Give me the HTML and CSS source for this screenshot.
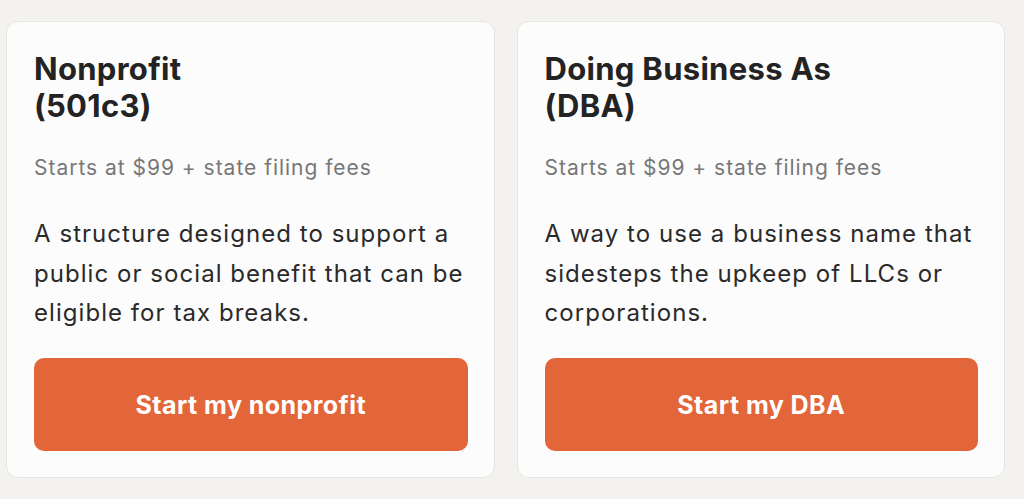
FILE: index.html
```html
<!DOCTYPE html>
<html lang="en">
<head>
<meta charset="utf-8">
<title>Business types</title>
<link rel="stylesheet" href="styles.css">
</head>
<body>
<main class="cards">
  <section class="card">
    <h2 class="card-title">Nonprofit<br>(501c3)</h2>
    <p class="card-price">Starts at $99 + state filing fees</p>
    <p class="card-desc">A structure designed to support a public or social benefit that can be eligible for tax breaks.</p>
    <a class="card-btn" href="#">Start my nonprofit</a>
  </section>
  <section class="card">
    <h2 class="card-title">Doing Business As<br>(DBA)</h2>
    <p class="card-price">Starts at $99 + state filing fees</p>
    <p class="card-desc">A way to use a business name that sidesteps the upkeep of LLCs or corporations.</p>
    <a class="card-btn" href="#">Start my DBA</a>
  </section>
</main>
</body>
</html>
```
FILE: styles.css
```css
* { box-sizing: border-box; }
html, body { margin: 0; background: #f3f2ee; }
body { font-family: Inter, "Open Sans", "Liberation Sans", sans-serif; }
.cards {
  display: flex;
  gap: 22px;
  padding: 21px 19px 0 6px;
}
.card {
  flex: 1;
  height: 457px;
  background: #fcfcfc;
  border: 1px solid #e7e5e1;
  border-radius: 12px;
  padding: 28px 26px 26px 27px;
  display: flex;
  flex-direction: column;
}
.card-title {
  margin: 0;
  font-size: 31px;
  line-height: 37px;
  font-weight: 700;
  letter-spacing: 0.3px;
  color: #232323;
}
.card-price {
  margin: 30px 0 0;
  font-size: 21px;
  line-height: 28px;
  letter-spacing: 0.98px;
  color: #777;
}
.card-desc {
  margin: 32px -12px 0 0;
  font-size: 24px;
  line-height: 39.5px;
  letter-spacing: 1.05px;
  color: #2a2a2a;
}
.card-btn {
  margin-top: auto;
  height: 93px;
  display: flex;
  align-items: center;
  justify-content: center;
  background: #e2663a;
  border-radius: 10px;
  color: #fff;
  font-size: 25px;
  font-weight: 700;
  letter-spacing: 0.45px;
  text-decoration: none;
}
```
